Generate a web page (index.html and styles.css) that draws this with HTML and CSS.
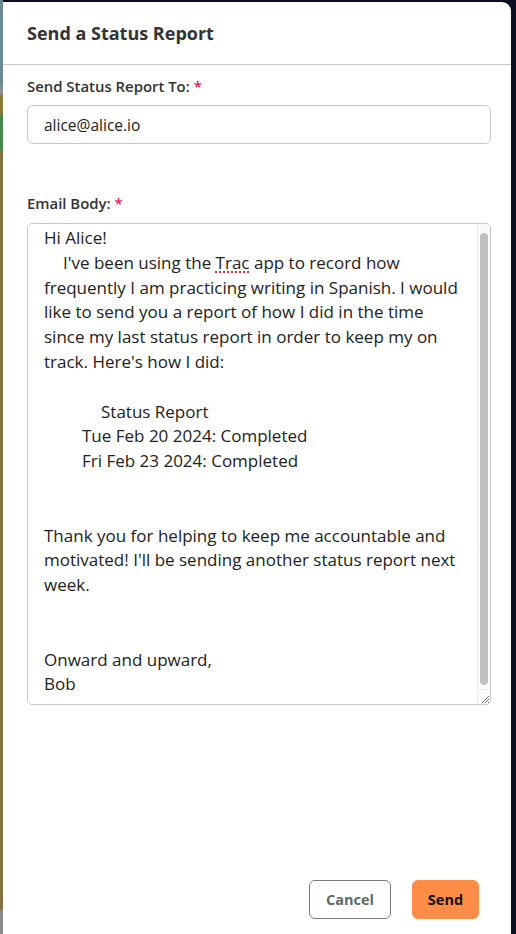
FILE: index.html
```html
<!DOCTYPE html>
<html lang="en">
<head>
<meta charset="utf-8">
<title>Send a Status Report</title>
<link rel="stylesheet" href="styles.css">
</head>
<body>
<div class="screen">
  <div class="backdrop">
    <div class="bd bd-slate"></div>
    <div class="bd bd-gray"></div>
    <div class="bd bd-olive"></div>
    <div class="bd bd-green"></div>
    <div class="bd bd-olive2"></div>
    <div class="bd bd-gray2"></div>
  </div>
  <div class="modal">
    <header class="modal-header">
      <h1 class="modal-title">Send a Status Report</h1>
    </header>
    <div class="modal-body">
      <label class="field-label">Send Status Report To: <span class="req">*</span></label>
      <div class="input">alice@alice.io</div>
      <label class="field-label field-label-body">Email Body: <span class="req">*</span></label>
      <div class="textarea">
        <div class="ta-text">
          <div class="ln">Hi Alice!</div>
          <div class="ln i1">I've been using the <span class="spell">Trac</span> app to record how</div>
          <div class="ln">frequently I am practicing writing in Spanish. I would</div>
          <div class="ln">like to send you a report of how I did in the time</div>
          <div class="ln">since my last status report in order to keep my on</div>
          <div class="ln">track. Here's how I did:</div>
          <div class="ln">&nbsp;</div>
          <div class="ln i3">Status Report</div>
          <div class="ln i2">Tue Feb 20 2024: Completed</div>
          <div class="ln i2">Fri Feb 23 2024: Completed</div>
          <div class="ln">&nbsp;</div>
          <div class="ln">&nbsp;</div>
          <div class="ln">Thank you for helping to keep me accountable and</div>
          <div class="ln">motivated! I'll be sending another status report next</div>
          <div class="ln">week.</div>
          <div class="ln">&nbsp;</div>
          <div class="ln">&nbsp;</div>
          <div class="ln">Onward and upward,</div>
          <div class="ln">Bob</div>
        </div>
        <div class="scrollbar">
          <div class="thumb"></div>
        </div>
        <div class="resizer">
          <svg width="10" height="10" viewBox="0 0 10 10"><path d="M9 2 L2 9 M9 5 L5 9 M9 8 L8 9" stroke="#777" stroke-width="1" fill="none"/></svg>
        </div>
      </div>
    </div>
    <footer class="modal-footer">
      <button class="btn btn-cancel">Cancel</button>
      <button class="btn btn-send">Send</button>
    </footer>
  </div>
  <div class="edge"></div>
</div>
</body>
</html>
```
FILE: styles.css
```css
* { box-sizing: border-box; }
html, body { margin: 0; padding: 0; }
body {
  background: #0b1020;
  font-family: "Open Sans", "Noto Sans", sans-serif;
  color: #333;
  width: 516px;
  height: 934px;
  overflow: hidden;
}
.screen {
  display: flex;
  height: 934px;
  padding-top: 2px;
}
.backdrop {
  width: 3px;
  display: flex;
  flex-direction: column;
  margin-top: -2px;
}
.bd { width: 3px; }
.bd-slate { height: 86px; background: #6c8a92; }
.bd-gray { height: 9px; background: #8d8d8d; }
.bd-olive { height: 20px; background: #8c7a35; }
.bd-green { height: 36px; background: #3f8a4c; }
.bd-olive2 { height: 759px; background: #86743a; }
.bd-gray2 { flex: 1; background: #8a8a8a; }
.modal {
  width: 508px;
  background: #fff;
  border-top-right-radius: 9px;
  display: flex;
  flex-direction: column;
}
.edge { flex: 1; }
.modal-header {
  height: 63px;
  border-bottom: 1px solid #c9c9c9;
  display: flex;
  align-items: center;
  padding: 0 24px;
}
.modal-title {
  margin: 0;
  font-size: 18px;
  font-weight: 700;
  color: #333;
}
.modal-body {
  padding: 12px 20px 0 24px;
  display: flex;
  flex-direction: column;
}
.field-label {
  font-size: 14.9px;
  font-weight: 600;
  color: #333;
  line-height: 18px;
  height: 18px;
}
.req { color: #e8175d; }
.input {
  margin-top: 10px;
  height: 39px;
  border: 1px solid #c8c8c8;
  border-radius: 6px;
  padding: 0 16px;
  display: flex;
  align-items: center;
  font-size: 15.5px;
  color: #222;
}
.field-label-body { margin-top: 50px; }
.textarea {
  position: relative;
  margin-top: 11px;
  height: 482px;
  border: 1px solid #c8c8c8;
  border-radius: 5px;
  overflow: hidden;
}
.ta-text {
  padding: 2px 16px 0 16px;
  font-size: 17px;
  line-height: 24.8px;
  color: #222;
}
.ln { white-space: nowrap; }
.i1 { padding-left: 19px; }
.i2 { padding-left: 38px; }
.i3 { padding-left: 57px; }
.spell {
  text-decoration: underline dotted #e0322f;
  text-decoration-thickness: 1.5px;
  text-underline-offset: 3px;
}
.scrollbar {
  position: absolute;
  top: 0;
  right: 0;
  width: 13px;
  bottom: 15px;
  background: #fafafa;
  border-left: 1px solid #ededed;
  padding: 9px 2px 4px 2px;
}
.thumb {
  height: 100%;
  background: #c1c1c1;
  border-radius: 4px;
}
.resizer {
  position: absolute;
  right: 0;
  bottom: 0;
  width: 13px;
  height: 15px;
  background: #fafafa;
  border-left: 1px solid #ededed;
  border-top: 1px solid #ededed;
  display: flex;
  align-items: flex-end;
  justify-content: flex-end;
}
.resizer svg { display: block; }
.modal-footer {
  margin-top: auto;
  display: flex;
  justify-content: flex-end;
  gap: 21px;
  padding: 0 32px 15px 0;
}
.btn {
  height: 39px;
  border-radius: 6px;
  font-family: "Open Sans", "Noto Sans", sans-serif;
  font-size: 14.5px;
  font-weight: 700;
  cursor: pointer;
}
.btn-cancel {
  width: 82px;
  background: #fff;
  border: 1px solid #6f7d7d;
  color: #5d6a6a;
}
.btn-send {
  width: 67px;
  background: #ff8c47;
  border: none;
  color: #111;
}
```
